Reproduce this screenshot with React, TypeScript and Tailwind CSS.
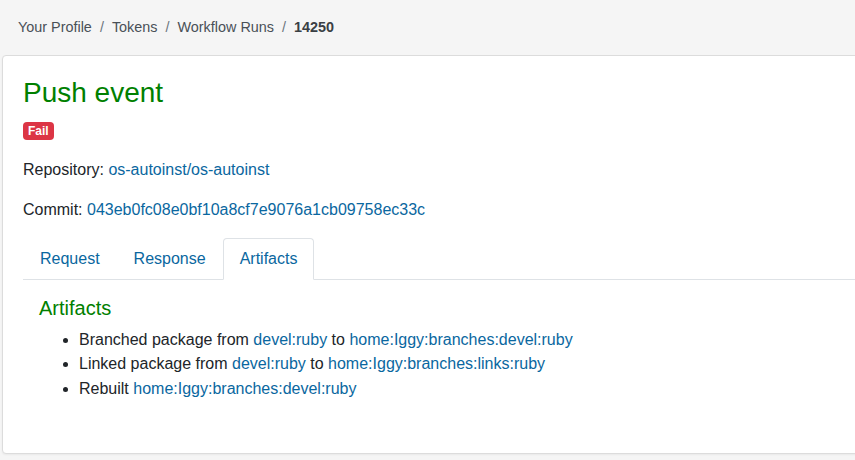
import React from "react";

const link = "text-[#0a67a0] hover:underline";

export default function App() {
  return (
    <div
      className="min-h-[460px] w-[855px] overflow-hidden bg-[#f5f5f5] text-[#212529]"
      style={{ fontFamily: '"Liberation Sans", Arial, sans-serif' }}
    >
      <nav className="h-[55px] flex items-center pl-[18px] pt-[1px] text-[14.4px] text-[#495057]">
        <a className="text-[#495057]">Your Profile</a>
        <span className="px-2 text-[#6c757d]">/</span>
        <a className="text-[#495057]">Tokens</a>
        <span className="px-2 text-[#6c757d]">/</span>
        <a className="text-[#495057]">Workflow Runs</a>
        <span className="px-2 text-[#6c757d]">/</span>
        <span className="font-bold text-[#3a3f44]">14250</span>
      </nav>
      <div className="ml-[2px] w-[900px] border border-[#dcdcdc] rounded-[4px] bg-white p-5 text-[16px] leading-6 shadow-[0_1px_2px_rgba(0,0,0,0.05)]">
        <h3 className="text-[28px] leading-[1.2] font-normal text-[#008000] mb-2">Push event</h3>
        <p className="mb-4">
          <span className="inline-block align-baseline rounded-[4px] bg-[#dc3545] px-[5px] py-[3px] text-[12px] leading-none font-bold text-white">
            Fail
          </span>
        </p>
        <p className="mb-4">
          Repository: <a className={link}>os-autoinst/os-autoinst</a>
        </p>
        <p className="mb-4">
          Commit: <a className={link}>043eb0fc08e0bf10a8cf7e9076a1cb09758ec33c</a>
        </p>
        <ul className="flex border-b border-[#dee2e6]">
          <li className="-mb-px">
            <a className="block px-4 py-2 border border-transparent rounded-t-[4px] text-[#0a67a0]">Request</a>
          </li>
          <li className="-mb-px">
            <a className="block px-4 py-2 border border-transparent rounded-t-[4px] text-[#0a67a0]">Response</a>
          </li>
          <li className="-mb-px">
            <a className="block px-4 py-2 border border-[#dee2e6] border-b-white bg-white rounded-t-[4px] text-[#0a67a0]">
              Artifacts
            </a>
          </li>
        </ul>
        <div className="p-4">
          <h5 className="text-[20px] leading-[1.2] font-normal text-[#008000] mb-2">Artifacts</h5>
          <ul className="list-disc pl-10 mb-4 leading-[24.5px]">
            <li>
              Branched package from <a className={link}>devel:ruby</a> to{" "}
              <a className={link}>home:Iggy:branches:devel:ruby</a>
            </li>
            <li>
              Linked package from <a className={link}>devel:ruby</a> to{" "}
              <a className={link}>home:Iggy:branches:links:ruby</a>
            </li>
            <li>
              Rebuilt <a className={link}>home:Iggy:branches:devel:ruby</a>
            </li>
          </ul>
        </div>
      </div>
    </div>
  );
}
